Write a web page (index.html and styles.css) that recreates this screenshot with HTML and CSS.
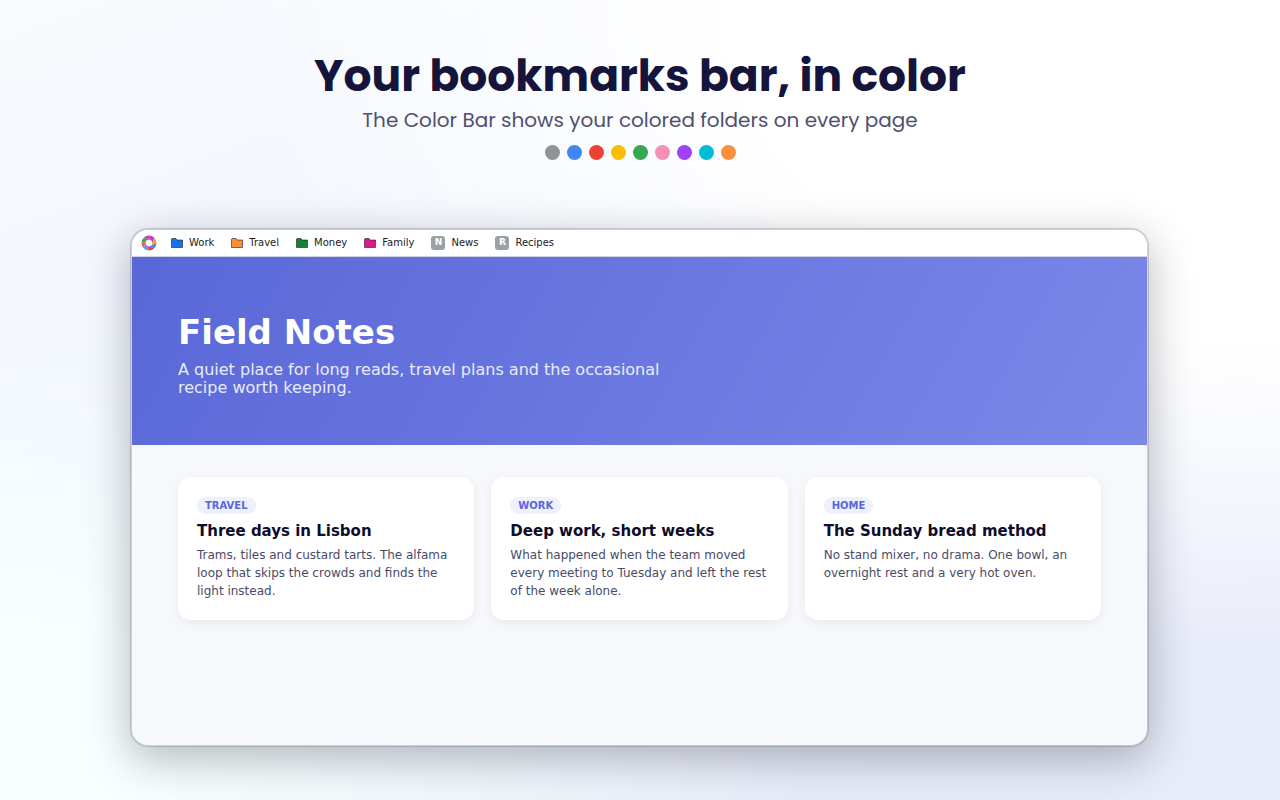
FILE: index.html
```html
<!DOCTYPE html>
<html lang="en">
  <head>
    <meta charset="UTF-8" />
    <meta name="viewport" content="width=device-width, initial-scale=1.0" />
    <title>Your bookmarks bar, in color</title>
    <link rel="stylesheet" href="styles.css">
  </head>
  <body>
    <header class="promo">
      <h1>Your bookmarks bar, in color</h1>
      <p>The Color Bar shows your colored folders on every page</p>
      <div class="dots">
        <span class="dot grey"></span>
        <span class="dot blue"></span>
        <span class="dot red"></span>
        <span class="dot yellow"></span>
        <span class="dot green"></span>
        <span class="dot pink"></span>
        <span class="dot purple"></span>
        <span class="dot cyan"></span>
        <span class="dot orange"></span>
      </div>
    </header>

    <main class="window">
      <nav class="bar">
        <svg class="logo" viewBox="0 0 16 16" aria-hidden="true">
          <path d="M8 .5A7.5 7.5 0 0 1 13.3 2.7L11.4 8L10.4 5.6Z" fill="#a142f4" />
          <path d="M13.3 2.7A7.5 7.5 0 0 1 15.5 8L10.4 10.4L11.4 8Z" fill="#fa9a2e" />
          <path d="M15.5 8A7.5 7.5 0 0 1 13.3 13.3L8 11.4L10.4 10.4Z" fill="#4285f4" />
          <path d="M13.3 13.3A7.5 7.5 0 0 1 8 15.5L5.6 10.4L8 11.4Z" fill="#ea4335" />
          <path d="M8 15.5A7.5 7.5 0 0 1 2.7 13.3L4.6 8L5.6 10.4Z" fill="#4f9df7" />
          <path d="M2.7 13.3A7.5 7.5 0 0 1 .5 8L5.6 5.6L4.6 8Z" fill="#f9603e" />
          <path d="M.5 8A7.5 7.5 0 0 1 2.7 2.7L8 4.6L5.6 5.6Z" fill="#2fa866" />
          <path d="M2.7 2.7A7.5 7.5 0 0 1 8 .5L10.4 5.6L8 4.6Z" fill="#e0359c" />
        </svg>
        <div class="links">
          <a class="work" href="#">
            <svg class="folder" viewBox="0 0 12 10"><path d="M.5 1V9.5H11.5V2H6L5 .5H1Z" /></svg>
            Work
          </a>
          <a class="travel" href="#">
            <svg class="folder" viewBox="0 0 12 10"><path d="M.5 1V9.5H11.5V2H6L5 .5H1Z" /></svg>
            Travel
          </a>
          <a class="money" href="#">
            <svg class="folder" viewBox="0 0 12 10"><path d="M.5 1V9.5H11.5V2H6L5 .5H1Z" /></svg>
            Money
          </a>
          <a class="family" href="#">
            <svg class="folder" viewBox="0 0 12 10"><path d="M.5 1V9.5H11.5V2H6L5 .5H1Z" /></svg>
            Family
          </a>
          <a href="#"><span class="letter">N</span>News</a>
          <a href="#"><span class="letter">R</span>Recipes</a>
        </div>
      </nav>

      <section class="hero">
        <h2>Field Notes</h2>
        <p>A quiet place for long reads, travel plans and the occasional recipe worth keeping.</p>
      </section>

      <section class="cards">
        <article class="card">
          <span class="tag">TRAVEL</span>
          <h3>Three days in Lisbon</h3>
          <p>Trams, tiles and custard tarts. The alfama loop that skips the crowds and finds the light instead.</p>
        </article>
        <article class="card">
          <span class="tag">WORK</span>
          <h3>Deep work, short weeks</h3>
          <p>What happened when the team moved every meeting to Tuesday and left the rest of the week alone.</p>
        </article>
        <article class="card">
          <span class="tag">HOME</span>
          <h3>The Sunday bread method</h3>
          <p>No stand mixer, no drama. One bowl, an overnight rest and a very hot oven.</p>
        </article>
      </section>
    </main>
  </body>
</html>
```

FILE: styles.css
```css
* {
  box-sizing: border-box;
}
body {
  margin: 0;
  min-height: 100vh;
  padding: 48px 10% 53px;
  display: flex;
  flex-direction: column;
  font-family: "DejaVu Sans", sans-serif;
  background:
    radial-gradient(ellipse at 100% 0%, #fff 30%, rgba(255, 255, 255, 0) 58%),
    radial-gradient(ellipse at 0% 90%, #f8fffe 10%, rgba(248, 255, 254, 0) 45%),
    linear-gradient(160deg, #f8fafd 0%, #f1f5fe 40%, #e8ecf9 85%);
}
h1,
h2,
h3,
p {
  margin: 0;
}

.promo {
  text-align: center;
  font-family: Poppins, Inter, sans-serif;
}
.promo h1 {
  font-size: 44px;
  line-height: 56px;
  font-weight: 700;
  color: #14143c;
}
.promo p {
  margin-top: 2px;
  font-size: 20px;
  line-height: 28px;
  color: #50506e;
}
.dots {
  display: flex;
  justify-content: center;
  gap: 7px;
  margin-top: 11px;
}
.dot {
  width: 15px;
  height: 15px;
  border-radius: 50%;
}
.grey { background: #8f9297; }
.blue { background: #4285f4; }
.red { background: #ea4335; }
.yellow { background: #fbbc04; }
.green { background: #34a853; }
.pink { background: #f58fb8; }
.purple { background: #a142f4; }
.cyan { background: #00bcd4; }
.orange { background: #fa903e; }

.window {
  flex: 1;
  margin: 68px 3px 0 2px;
  border: 2px solid rgba(60, 64, 90, 0.22);
  border-radius: 18px;
  background: #f6f8fc;
  background-clip: padding-box;
  overflow: hidden;
  box-shadow: 0 12px 44px rgba(20, 24, 40, 0.3);
}
.bar {
  display: flex;
  align-items: center;
  gap: 14px;
  height: 27px;
  padding: 0 9px 1px;
  background: #fff;
  border-bottom: 1px solid #d0d3e4;
}
.links {
  display: flex;
  gap: 17px;
}
.bar a {
  display: flex;
  align-items: center;
  gap: 6px;
  font-size: 10px;
  color: #202124;
  text-decoration: none;
}
.logo {
  width: 16px;
  height: 16px;
}
.folder {
  width: 12px;
  height: 10px;
  stroke: rgba(0, 0, 0, 0.5);
}
.work { fill: #1a73e8; }
.travel { fill: #fa903e; }
.money { fill: #188038; }
.family { fill: #d91a88; }
.letter {
  width: 14px;
  height: 14px;
  border-radius: 3px;
  background: #9aa0a6;
  color: #fff;
  font-size: 9px;
  line-height: 13px;
  font-weight: 700;
  text-align: center;
}

.hero {
  padding: 53px 46px 48px;
  background: linear-gradient(120deg, #5a67d8, #7a88e8);
  color: #fff;
}
.hero h2 {
  font-size: 34px;
  line-height: 44px;
}
.hero p {
  max-width: 490px;
  margin-top: 7px;
  font-size: 16px;
  line-height: 18px;
  color: #e9ebfb;
}

.cards {
  display: grid;
  grid-template-columns: repeat(3, 1fr);
  gap: 17px;
  padding: 32px 46px;
}
.card {
  display: flex;
  flex-direction: column;
  align-items: flex-start;
  padding: 20px 19px;
  border-radius: 13px;
  background: #fff;
  box-shadow: 0 3px 12px rgba(20, 24, 40, 0.06);
}
.tag {
  padding: 0 8px;
  border-radius: 9px;
  background: #eef0fc;
  color: #5a67d8;
  font-size: 10px;
  line-height: 17px;
  font-weight: 700;
}
.card h3 {
  margin-top: 7px;
  font-size: 15px;
  line-height: 20px;
  color: #0d0d2b;
}
.card p {
  margin-top: 5px;
  font-size: 12px;
  line-height: 18px;
  color: #4a4a68;
}
```
